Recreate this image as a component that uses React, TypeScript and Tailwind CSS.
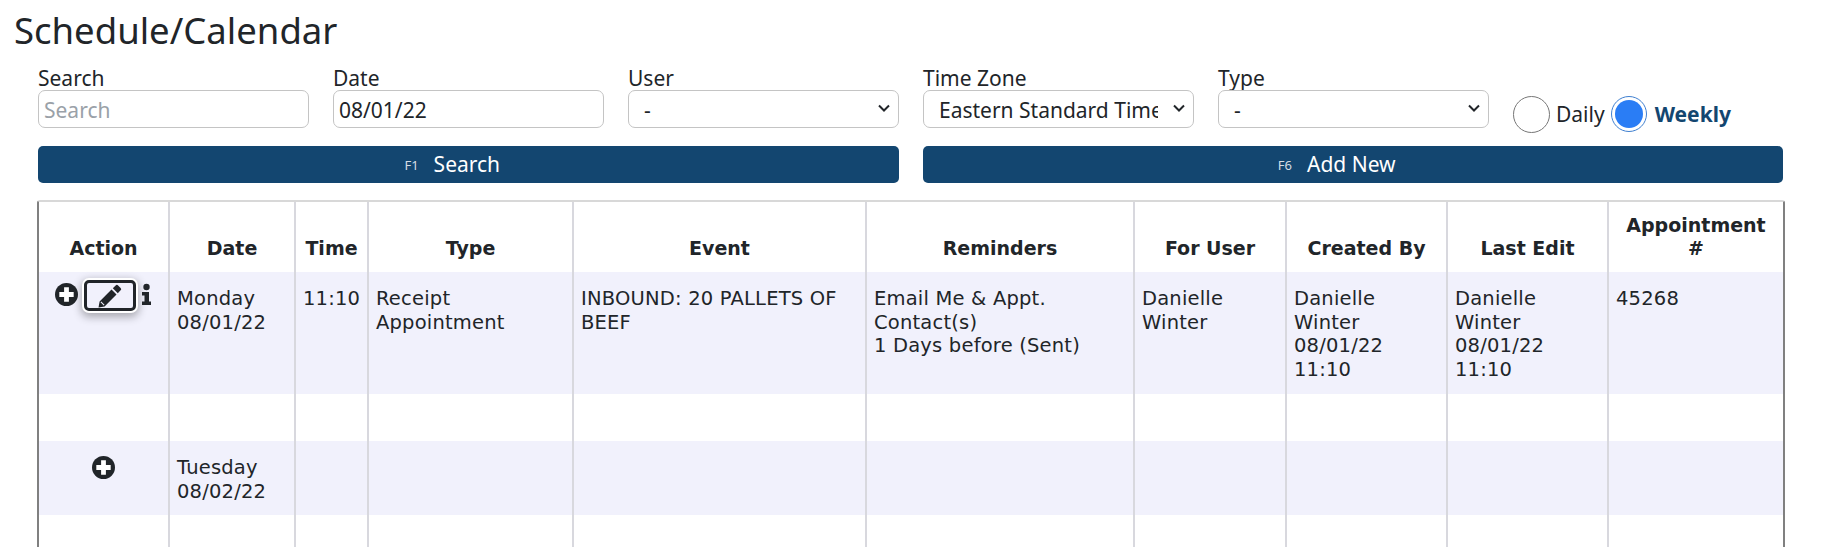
import React from "react";

const sans = "font-['Noto_Sans',sans-serif]";
const dv = "font-['DejaVu_Sans',sans-serif]";

const widths = [131, 126, 73, 205, 293, 268, 152, 161, 161, 174];
const headers: React.ReactNode[] = ["Action", "Date", "Time", "Type", "Event", "Reminders", "For User", "Created By", "Last Edit", <>Appointment<br />#</>];

function Plus({ size = 23 }: { size?: number }) {
  return (
    <svg width={size} height={size} viewBox="0 0 24 24" className="shrink-0">
      <circle cx="12" cy="12" r="12" fill="#212529" />
      <path d="M9.5 4.5h5v5h5v5h-5v5h-5v-5h-5v-5h5z" fill="#fff" />
    </svg>
  );
}

function Pencil() {
  return (
    <svg width="26" height="26" viewBox="0 0 24 24">
      <path d="M17.2 2.2a1.6 1.6 0 0 1 2.3 0l2.3 2.3a1.6 1.6 0 0 1 0 2.3l-2.6 2.6-4.6-4.6zM13.4 6l4.6 4.6L7 21.6l-5.6 1 1-5.6z" fill="#212529" />
      <path d="M3.6 17.4l3 3" stroke="#f1f1fc" strokeWidth="1" />
    </svg>
  );
}

function Info() {
  return (
    <svg width="11" height="23" viewBox="0 0 10 23" className="shrink-0">
      <circle cx="5" cy="4" r="3.2" fill="#212529" />
      <path d="M0.5 9h7v9.5h2V22H0.5v-3.5H3V12.5H0.5z" fill="#212529" />
    </svg>
  );
}

function Row({ cells, h, shaded, pt = 15 }: { cells: React.ReactNode[]; h: number; shaded?: boolean; pt?: number }) {
  return (
    <div style={{ height: h }} className={`flex ${shaded ? "bg-[#f1f1fc]" : "bg-white"}`}>
      {widths.map((w, i) => (
        <div key={i} style={{ width: w, paddingTop: pt }} className="shrink-0 border-r-2 border-[#d8d8de] last:border-r-0 pl-[7px] pr-2 text-[19.5px] leading-[23.5px] tracking-[0.2px] text-[#212529]">
          {cells[i]}
        </div>
      ))}
    </div>
  );
}

function Label({ children }: { children: React.ReactNode }) {
  return <label className="block text-[21px] leading-[24px] text-[#212529]">{children}</label>;
}

function Chevron() {
  return (
    <svg width="12" height="8" viewBox="0 0 12 8" className="absolute right-[8px] top-[13px]">
      <path d="M1 1.5l5 5 5-5" fill="none" stroke="#212529" strokeWidth="2" />
    </svg>
  );
}

function SelectBox({ text, clip }: { text: string; clip?: boolean }) {
  return (
    <div className="relative h-[38px] rounded-[7px] border border-[#c4c4c4] bg-white">
      <div className={`ml-[15px] pt-[5px] text-[21px] leading-[28px] text-[#212529] whitespace-nowrap overflow-hidden ${clip ? "w-[219px]" : ""}`}>{text}</div>
      <Chevron />
    </div>
  );
}

function TextBox({ text, muted }: { text: string; muted?: boolean }) {
  return (
    <div className={`h-[38px] rounded-[7px] border border-[#c4c4c4] pl-[5px] pt-[5px] text-[21px] leading-[28px] ${muted ? "text-[#9aa1a8]" : "text-[#212529]"}`}>{text}</div>
  );
}

function ActionButton({ k, label }: { k: string; label: string }) {
  return (
    <div className="flex h-[37px] flex-1 items-center justify-center gap-[15px] rounded-[5px] bg-[#134670] pr-[32px] text-white">
      <span className="pt-[3px] text-[13px] text-[#d5dde5]">{k}</span>
      <span className="text-[21px]">{label}</span>
    </div>
  );
}

export default function App() {
  return (
    <div className={`${sans} h-[547px] w-[1826px] overflow-hidden bg-white`}>
      <h1 className="pl-[14px] pt-[7px] text-[36.5px] leading-[46px] text-[#212529]">Schedule/Calendar</h1>
      <div className="ml-[38px] mt-[13px] w-[1745px]">
        <div className="flex items-start gap-[24px]">
          <div className="w-[271px]">
            <Label>Search</Label>
            <TextBox text="Search" muted />
          </div>
          <div className="w-[271px]">
            <Label>Date</Label>
            <TextBox text="08/01/22" />
          </div>
          <div className="w-[271px]">
            <Label>User</Label>
            <SelectBox text="-" />
          </div>
          <div className="w-[271px]">
            <Label>Time Zone</Label>
            <SelectBox text="Eastern Standard Time" clip />
          </div>
          <div className="w-[271px]">
            <Label>Type</Label>
            <SelectBox text="-" />
          </div>
          <div className="flex h-[62px] items-start pt-[30px] text-[21px] leading-[36px] text-[#212529]">
            <span className="h-[37px] w-[37px] shrink-0 rounded-full border border-[#777] bg-white" />
            <span className="ml-[6px]">Daily</span>
            <span className="ml-[6px] flex h-[36px] w-[36px] shrink-0 items-center justify-center rounded-full border border-[#3f7fd0]">
              <span className="h-[28px] w-[28px] rounded-full bg-[#2a7df5]" />
            </span>
            <span className="ml-[8px] font-bold text-[#134670]">Weekly</span>
          </div>
        </div>
        <div className="mt-[18px] flex gap-[24px]">
          <ActionButton k="F1" label="Search" />
          <ActionButton k="F6" label="Add New" />
        </div>
      </div>
      <div className={`${dv} ml-[37px] mt-[17px] w-[1748px] rounded-t-[3px] border-x-2 border-t-2 border-x-[#808080] border-t-[#d8d8d8]`}>
        <div className="flex h-[70px] bg-white">
          {headers.map((h, i) => (
            <div key={i} style={{ width: widths[i] }} className="flex shrink-0 items-end justify-center border-r-2 border-[#d8d8de] last:border-r-0 px-1 pb-[12px] text-center text-[19px] font-bold leading-[23px] text-[#212529]">
              <div>{h}</div>
            </div>
          ))}
        </div>
        <Row
          shaded
          h={122}
          cells={[
            <div className="-ml-[7px] -mr-[8px] -mt-[4px] flex items-start justify-center">
              <Plus />
              <div className="-mt-[3px] ml-[6px] flex h-[31px] w-[52px] shrink-0 items-center justify-center rounded-[5px] border-[3px] border-[#212529] bg-[#f1f1fc] shadow-[0_0_0_2px_#ffffff,0_3px_8px_3px_rgba(0,0,0,0.3)]">
                <Pencil />
              </div>
              <div className="ml-[5px]"><Info /></div>
            </div>,
            <>Monday<br />08/01/22</>,
            <span className="whitespace-nowrap">11:10</span>,
            <>Receipt Appointment</>,
            "INBOUND: 20 PALLETS OF BEEF",
            <>Email Me &amp; Appt. Contact(s)<br />1 Days before (Sent)</>,
            "Danielle Winter",
            <>Danielle Winter<br />08/01/22 11:10</>,
            <>Danielle Winter<br />08/01/22 11:10</>,
            "45268",
          ]}
        />
        <Row h={47} cells={[]} />
        <Row
          shaded
          h={74}
          cells={[
            <div className="flex justify-center"><Plus /></div>,
            <>Tuesday<br />08/02/22</>,
          ]}
        />
        <Row h={40} cells={[]} />
      </div>
    </div>
  );
}
